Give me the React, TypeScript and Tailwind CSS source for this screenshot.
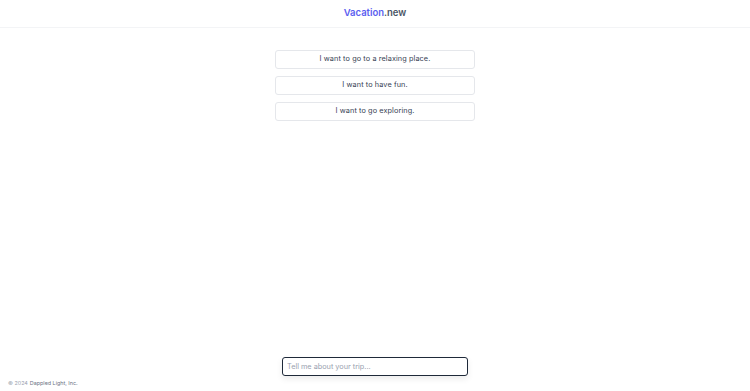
const suggestions = [
  "I want to go to a relaxing place.",
  "I want to have fun.",
  "I want to go exploring.",
];

export default function App() {
  return (
    <div className="flex h-screen flex-col bg-white font-['Inter',sans-serif] text-gray-700">
      {/* Header */}
      <header className="flex h-[28px] shrink-0 items-center justify-center border-b border-gray-100">
        <h1 className="text-[9.5px] font-semibold">
          <span className="text-[#5b5ef0]">Vacation</span>
          <span className="text-gray-600">.new</span>
        </h1>
      </header>

      {/* Suggestions */}
      <main className="flex flex-1 flex-col items-center pt-[22px]">
        <div className="flex w-[200px] flex-col gap-[7px]">
          {suggestions.map((s) => (
            <button
              key={s}
              className="h-[19px] w-full rounded-[3px] border border-gray-200 bg-white text-[7.3px] tracking-[0.1px] text-gray-700"
            >
              {s}
            </button>
          ))}
        </div>
      </main>

      {/* Prompt input */}
      <div className="flex shrink-0 justify-center pt-[1px]">
        <input
          type="text"
          placeholder="Tell me about your trip..."
          className="h-[19px] w-[186px] rounded-[3px] border border-gray-800 bg-white px-[4px] text-[7.3px] text-gray-700 shadow-[0_3px_6px_rgba(0,0,0,0.08)] outline-none placeholder:text-gray-400"
        />
      </div>

      <footer className="flex h-[15px] shrink-0 items-center px-[8px] text-[5.4px]">
        <span className="text-gray-400">© 2024</span>
        <span className="ml-[2px] text-gray-500">Dappled Light, Inc.</span>
      </footer>
    </div>
  );
}
